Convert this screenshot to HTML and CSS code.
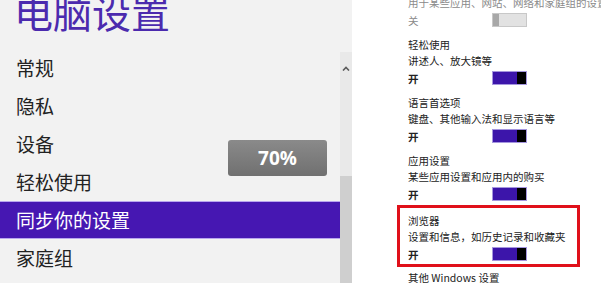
FILE: index.html
```html
<!DOCTYPE html>
<html lang="zh-CN">
<head>
    <meta charset="UTF-8">
    <meta name="viewport" content="width=device-width, initial-scale=1.0">
    <title>电脑设置</title>
    <link rel="stylesheet" href="styles.css">
</head>
<body>
    <div class="screen">
        <div class="side">
            <h1 class="title">电脑设置</h1>
            <nav class="menu">
                <a href="#">常规</a>
                <a href="#">隐私</a>
                <a href="#">设备</a>
                <a href="#">轻松使用</a>
                <a href="#" class="active">同步你的设置</a>
                <a href="#">家庭组</a>
            </nav>
        </div>

        <div class="scrollbar">
            <div class="scroll-top"></div>
            <div class="scroll-track">
                <div class="scroll-arrow">
                    <svg width="8" height="5" viewBox="0 0 8 5"><path d="M1 4.5 L4 1.5 L7 4.5" fill="none" stroke="#5a5a5a" stroke-width="1.6"/></svg>
                </div>
                <div class="scroll-thumb"></div>
            </div>
        </div>

        <div class="content">
            <div class="setting off">
                <div class="name">个性化设置</div>
                <div class="desc">用于某些应用、网站、网络和家庭组的设置</div>
                <div class="state"><span>关</span><div class="toggle"></div></div>
            </div>
            <div class="setting">
                <div class="name">轻松使用</div>
                <div class="desc">讲述人、放大镜等</div>
                <div class="state"><span>开</span><div class="toggle on"></div></div>
            </div>
            <div class="setting">
                <div class="name">语言首选项</div>
                <div class="desc">键盘、其他输入法和显示语言等</div>
                <div class="state"><span>开</span><div class="toggle on"></div></div>
            </div>
            <div class="setting">
                <div class="name">应用设置</div>
                <div class="desc">某些应用设置和应用内的购买</div>
                <div class="state"><span>开</span><div class="toggle on"></div></div>
            </div>
            <div class="setting marked">
                <div class="name">浏览器</div>
                <div class="desc">设置和信息，如历史记录和收藏夹</div>
                <div class="state"><span>开</span><div class="toggle on"></div></div>
            </div>
            <div class="setting">
                <div class="name">其他 Windows 设置</div>
            </div>
        </div>

        <!-- zoom level toast over the page -->
        <div class="zoom-badge">70%</div>
    </div>
</body>
</html>
```

FILE: styles.css
```css
* {
    margin: 0;
    padding: 0;
    box-sizing: border-box;
}
body {
    font-family: "Noto Sans CJK SC", "Noto Sans", sans-serif;
    background-color: white;
    color: #222;
    overflow: hidden;
}
.screen {
    position: relative;
    display: flex;
    width: 601px;
    height: 283px;
    overflow: hidden;
}
.side {
    width: 340px;
    background-color: #f2f2f2;
}
.title {
    font-size: 39px;
    font-weight: normal;
    line-height: 46px;
    color: #4b2aae;
    margin-top: -12px;
    margin-bottom: 15px;
    padding-left: 14px;
    letter-spacing: 0;
}
.menu {
    display: flex;
    flex-direction: column;
}
.menu a {
    display: block;
    height: 38px;
    line-height: 38px;
    padding-left: 16px;
    font-size: 19px;
    color: #222;
    text-decoration: none;
}
.menu a.active {
    background-color: #4617b2;
    color: white;
    border-top: 1px solid #b9a6ee;
    border-bottom: 1px solid #b9a6ee;
    line-height: 36px;
}
.scrollbar {
    width: 12px;
    display: flex;
    flex-direction: column;
    background-color: #f2f2f2;
}
.scroll-top {
    height: 52px;
}
.scroll-track {
    flex: 1;
    display: flex;
    flex-direction: column;
    background-color: #e9e9e9;
}
.scroll-arrow {
    height: 20px;
    display: flex;
    justify-content: center;
    align-items: center;
    margin-top: 6px;
}
.scroll-thumb {
    flex: 1;
    margin-top: 98px;
    background-color: #cfcfcf;
}
.content {
    flex: 1;
    padding-left: 56px;
    margin-top: -21px;
    font-size: 10.5px;
    white-space: nowrap;
    overflow: hidden;
}
.setting {
    margin-bottom: 8px;
}
.setting .name, .setting .desc {
    line-height: 16px;
}
.setting .state {
    display: flex;
    align-items: center;
    height: 18px;
    font-weight: bold;
}
.state span {
    width: 84px;
}
.setting.off .desc, .setting.off .state {
    color: #8a8a8a;
    font-weight: normal;
}
.setting.marked {
    width: 183px;
    margin-left: -11px;
    margin-top: -6px;
    margin-bottom: 3px;
    padding: 5px 0 1px 8px;
    border: 3px solid #e0101a;
}
.toggle {
    width: 35px;
    height: 14px;
    border: 1px solid #c8c8c8;
    background-color: #e2e2e2;
    display: flex;
}
.toggle::before {
    content: "";
    width: 6px;
    background-color: #a8a8a8;
}
.toggle.on {
    border-color: #a596de;
    background-color: #3c15aa;
    justify-content: flex-end;
}
.toggle.on::before {
    width: 9px;
    background-color: #000;
}
.zoom-badge {
    position: absolute;
    left: 228px;
    top: 140px;
    width: 99px;
    height: 36px;
    line-height: 36px;
    text-align: center;
    border-radius: 3px;
    background: linear-gradient(#8a8a8a, #707070);
    color: white;
    font-family: "Open Sans", "Noto Sans", sans-serif;
    font-weight: bold;
    font-size: 19px;
}
```
